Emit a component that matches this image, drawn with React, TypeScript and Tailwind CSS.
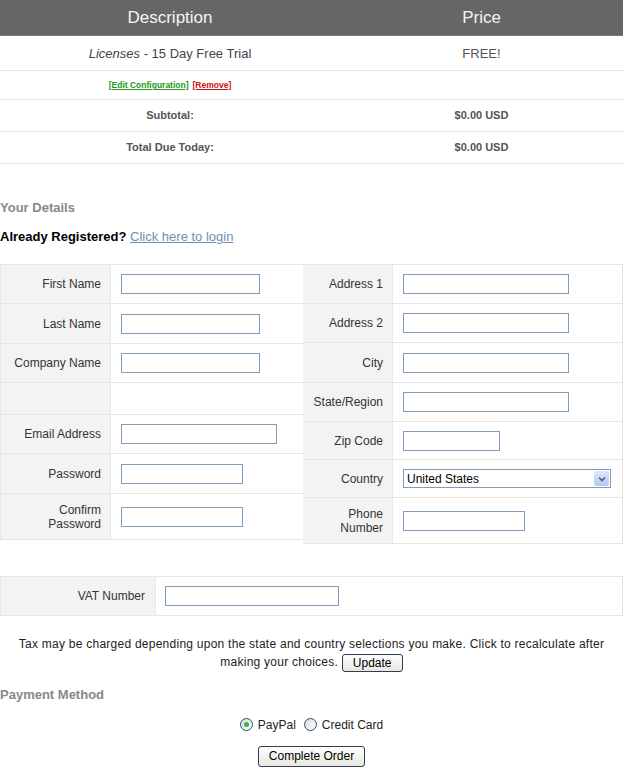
import React from 'react';

const font = { fontFamily: '"Liberation Sans", Arial, sans-serif' };

function Field({ w }: { w: string }) {
    return <input type="text" className={`h-[20px] ${w} border border-[#7f9db9] bg-white outline-none`} />;
}

interface RowProps {
    label?: React.ReactNode;
    h: string;
    labelW: string;
    children?: React.ReactNode;
}

function Row({ label, h, labelW, children }: RowProps) {
    return (
        <div className={`flex border-b border-[#e6e6e6] ${h}`}>
            <div className={`${labelW} shrink-0 bg-[#f3f3f3] border-r border-[#e8e8e8] flex items-center justify-end pr-[9px] text-right leading-[14px] text-[12px] text-[#333]`}>
                {label}
            </div>
            <div className="flex-1 flex items-center pl-[10px]">{children}</div>
        </div>
    );
}

function XpButton({ children, w, h }: { children: React.ReactNode; w: string; h: string }) {
    return (
        <button className={`${w} ${h} inline-flex items-center justify-center align-middle rounded-[3px] border border-[#2b3f5c] bg-gradient-to-b from-white to-[#e9e7de] text-[12px] text-black leading-none tracking-normal`}>
            {children}
        </button>
    );
}

function Radio({ checked }: { checked?: boolean }) {
    return (
        <span className="w-[13px] h-[13px] rounded-full border border-[#1c5180] bg-gradient-to-br from-[#dcdcd6] to-white flex items-center justify-center">
            {checked && <span className="w-[5px] h-[5px] rounded-full bg-[#3fb33f]" />}
        </span>
    );
}

export default function App() {
    return (
        <div className="w-[623px] bg-white text-[#333]" style={font}>
            {/* cart summary */}
            <div className="grid grid-cols-[340px_1fr] h-[36px] bg-[#666666] border-b border-[#7a7a7a] text-[17px] text-[#f4f4f4]">
                <div className="flex items-center justify-center">Description</div>
                <div className="flex items-center justify-center">Price</div>
            </div>
            <div className="grid grid-cols-[340px_1fr] h-[35px] border-b border-[#e6e6e6] text-[13px] text-[#444]">
                <div className="flex items-center justify-center pt-[2px]">
                    <i>Licenses</i>&nbsp;- 15 Day Free Trial
                </div>
                <div className="flex items-center justify-center pt-[2px] text-[#555]">FREE!</div>
            </div>
            <div className="grid grid-cols-[340px_1fr] h-[29px] border-b border-[#e6e6e6] text-[8.5px] font-bold">
                <div className="flex items-center justify-center gap-[4px] pt-[1px]">
                    <a className="text-[#229922] underline">[Edit Configuration]</a>
                    <a className="text-[#cc1111] underline">[Remove]</a>
                </div>
                <div />
            </div>
            <div className="grid grid-cols-[340px_1fr] h-[32px] border-b border-[#e6e6e6] text-[11px] font-bold text-[#555]">
                <div className="flex items-center justify-center">Subtotal:</div>
                <div className="flex items-center justify-center">$0.00 USD</div>
            </div>
            <div className="grid grid-cols-[340px_1fr] h-[32px] border-b border-[#e6e6e6] text-[11px] font-bold text-[#555]">
                <div className="flex items-center justify-center">Total Due Today:</div>
                <div className="flex items-center justify-center">$0.00 USD</div>
            </div>

            {/* details */}
            <div className="mt-[36px] text-[13px] leading-[16px] font-bold text-[#888]">Your Details</div>
            <div className="mt-[13px] text-[13px] leading-[16px]">
                <span className="font-bold text-black">Already Registered?</span>{' '}
                <a className="text-[#6d8fb3] underline">Click here to login</a>
            </div>

            <div className="mt-[19px] flex items-start">
                <div className="w-[303px] border-t border-l border-[#e6e6e6]">
                    <Row label="First Name" h="h-[39px]" labelW="w-[110px]"><Field w="w-[139px]" /></Row>
                    <Row label="Last Name" h="h-[40px]" labelW="w-[110px]"><Field w="w-[139px]" /></Row>
                    <Row label="Company Name" h="h-[39px]" labelW="w-[110px]"><Field w="w-[139px]" /></Row>
                    <Row h="h-[32px]" labelW="w-[110px]" />
                    <Row label="Email Address" h="h-[39px]" labelW="w-[110px]"><Field w="w-[156px]" /></Row>
                    <Row label="Password" h="h-[40px]" labelW="w-[110px]"><Field w="w-[122px]" /></Row>
                    <Row label={<>Confirm<br />Password</>} h="h-[46px]" labelW="w-[110px]"><Field w="w-[122px]" /></Row>
                </div>
                <div className="flex-1 border-t border-r border-[#e6e6e6]">
                    <Row label="Address 1" h="h-[39px]" labelW="w-[90px]"><Field w="w-[166px]" /></Row>
                    <Row label="Address 2" h="h-[39px]" labelW="w-[90px]"><Field w="w-[166px]" /></Row>
                    <Row label="City" h="h-[40px]" labelW="w-[90px]"><Field w="w-[166px]" /></Row>
                    <Row label="State/Region" h="h-[39px]" labelW="w-[90px]"><Field w="w-[166px]" /></Row>
                    <Row label="Zip Code" h="h-[38px]" labelW="w-[90px]"><Field w="w-[97px]" /></Row>
                    <Row label="Country" h="h-[38px]" labelW="w-[90px]">
                        <div className="relative w-[208px] h-[19px] border border-[#7f9db9] bg-white flex items-center pl-[3px] text-[12px] text-black">
                            United States
                            <span className="absolute right-[1px] top-[1px] w-[15px] h-[15px] rounded-[2px] bg-gradient-to-b from-[#dde8fd] to-[#b5c8f2] flex items-center justify-center">
                                <svg width="8" height="6" viewBox="0 0 8 6">
                                    <path d="M1 1.5 L4 4.5 L7 1.5" fill="none" stroke="#4d6185" strokeWidth="1.6" />
                                </svg>
                            </span>
                        </div>
                    </Row>
                    <Row label={<>Phone<br />Number</>} h="h-[46px]" labelW="w-[90px]"><Field w="w-[122px]" /></Row>
                </div>
            </div>

            <div className="mt-[32px] border border-[#e6e6e6]">
                <div className="flex h-[38px]">
                    <div className="w-[155px] shrink-0 bg-[#f3f3f3] border-r border-[#e8e8e8] flex items-center justify-end pr-[10px] text-[12px] text-[#333]">
                        VAT Number
                    </div>
                    <div className="flex-1 flex items-center pl-[9px]">
                        <Field w="w-[174px]" />
                    </div>
                </div>
            </div>

            <p className="mt-[19px] mx-auto max-w-[606px] text-center text-[12px] leading-[18px] tracking-[0.25px] text-[#222]">
                Tax may be charged depending upon the state and country selections you make. Click to recalculate after making your choices.{' '}
                <XpButton w="w-[61px]" h="h-[18px]">Update</XpButton>
            </p>

            <div className="mt-[15px] text-[13px] leading-[16px] font-bold text-[#888]">Payment Method</div>

            <div className="mt-[14px] flex items-center justify-center h-[16px] text-[12px] text-[#222]">
                <label className="flex items-center gap-[5px] mr-[8px]">
                    <Radio checked /> PayPal
                </label>
                <label className="flex items-center gap-[5px]">
                    <Radio /> Credit Card
                </label>
            </div>

            <div className="mt-[13px] pb-[9px] flex justify-center">
                <XpButton w="w-[107px]" h="h-[21px]">Complete Order</XpButton>
            </div>
        </div>
    );
}
